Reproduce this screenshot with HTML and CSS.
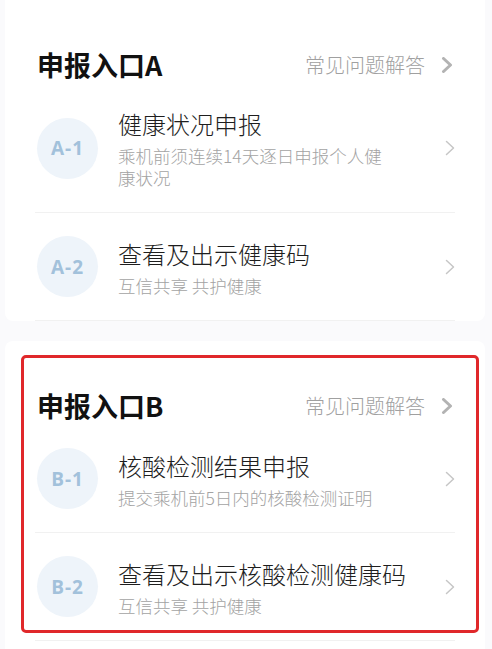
FILE: index.html
```html
<!DOCTYPE html>
<html lang="zh-CN">
<head>
<meta charset="utf-8">
<link rel="stylesheet" href="styles.css">
</head>
<body>
<div class="page">
  <section class="card card-a">
    <div class="card-head">
      <h2 class="card-title">申报入口A</h2>
      <div class="faq">常见问题解答
        <svg class="faq-arrow" viewBox="0 0 12 16" width="12" height="16"><path d="M2.5 1.5 L9.5 8 L2.5 14.5" fill="none" stroke="#b3b3b3" stroke-width="3" stroke-linecap="round" stroke-linejoin="round"/></svg>
      </div>
    </div>
    <div class="item">
      <div class="badge">A-1</div>
      <div class="item-text">
        <div class="item-title">健康状况申报</div>
        <div class="item-sub narrow">乘机前须连续14天逐日申报个人健康状况</div>
      </div>
      <svg class="item-arrow" viewBox="0 0 10 16" width="10" height="16"><path d="M1.5 1.5 L8.5 8 L1.5 14.5" fill="none" stroke="#c6c6c6" stroke-width="1.5" stroke-linecap="round" stroke-linejoin="round"/></svg>
    </div>
    <div class="item">
      <div class="badge">A-2</div>
      <div class="item-text">
        <div class="item-title">查看及出示健康码</div>
        <div class="item-sub">互信共享 共护健康</div>
      </div>
      <svg class="item-arrow" viewBox="0 0 10 16" width="10" height="16"><path d="M1.5 1.5 L8.5 8 L1.5 14.5" fill="none" stroke="#c6c6c6" stroke-width="1.5" stroke-linecap="round" stroke-linejoin="round"/></svg>
    </div>
  </section>

  <section class="card card-b">
    <div class="card-head">
      <h2 class="card-title">申报入口B</h2>
      <div class="faq">常见问题解答
        <svg class="faq-arrow" viewBox="0 0 12 16" width="12" height="16"><path d="M2.5 1.5 L9.5 8 L2.5 14.5" fill="none" stroke="#b3b3b3" stroke-width="3" stroke-linecap="round" stroke-linejoin="round"/></svg>
      </div>
    </div>
    <div class="item">
      <div class="badge">B-1</div>
      <div class="item-text">
        <div class="item-title">核酸检测结果申报</div>
        <div class="item-sub">提交乘机前5日内的核酸检测证明</div>
      </div>
      <svg class="item-arrow" viewBox="0 0 10 16" width="10" height="16"><path d="M1.5 1.5 L8.5 8 L1.5 14.5" fill="none" stroke="#c6c6c6" stroke-width="1.5" stroke-linecap="round" stroke-linejoin="round"/></svg>
    </div>
    <div class="item">
      <div class="badge">B-2</div>
      <div class="item-text">
        <div class="item-title">查看及出示核酸检测健康码</div>
        <div class="item-sub">互信共享 共护健康</div>
      </div>
      <svg class="item-arrow" viewBox="0 0 10 16" width="10" height="16"><path d="M1.5 1.5 L8.5 8 L1.5 14.5" fill="none" stroke="#c6c6c6" stroke-width="1.5" stroke-linecap="round" stroke-linejoin="round"/></svg>
    </div>
    <div class="highlight"></div>
  </section>
</div>
</body>
</html>
```

FILE: styles.css
```css
* { box-sizing: border-box; }
html, body {
  margin: 0;
  padding: 0;
  background: #fafafc;
  font-family: "Noto Sans CJK SC", "Noto Sans", "Liberation Sans", sans-serif;
  color: #1c1c1c;
}
.page {
  width: 492px;
  height: 649px;
  overflow: hidden;
  padding: 0 7px 0 5px;
  display: flex;
  flex-direction: column;
  gap: 20px;
}
.card {
  background: #ffffff;
  border-radius: 8px;
  padding: 0 30px 0 32px;
  position: relative;
}
.card-a { border-radius: 0 0 8px 8px; }
.card-b { flex: 1; border-radius: 8px 8px 0 0; }
.card-head {
  height: 84px;
  padding-top: 46px;
  display: flex;
  justify-content: space-between;
  align-items: flex-start;
}
.card-title {
  margin: 0;
  font-size: 27px;
  line-height: 38px;
  font-weight: 700;
  color: #111;
}
.faq {
  display: flex;
  align-items: center;
  gap: 16px;
  font-size: 20px;
  line-height: 38px;
  font-weight: 300;
  color: #a0a0a0;
  margin-right: 2px;
}
.faq-arrow { display: block; }
.item {
  display: flex;
  align-items: center;
  padding: 23px 0 23px 2px;
  border-bottom: 1px solid #f1f1f1;
  margin-left: -2px;
}
.badge {
  width: 61px;
  height: 61px;
  flex: none;
  border-radius: 50%;
  background: #eef4fa;
  color: #a2c1db;
  font-size: 19px;
  font-weight: 700;
  letter-spacing: 1px;
  display: flex;
  align-items: center;
  justify-content: center;
  font-family: "Open Sans", "Noto Sans", sans-serif;
}
.item-text {
  flex: 1;
  margin-left: 20px;
}
.item-title {
  font-size: 24px;
  line-height: 34px;
  font-weight: 300;
  color: #1e1e1e;
}
.item-sub {
  font-size: 17.5px;
  line-height: 22px;
  margin-top: 4px;
  font-weight: 300;
  color: #a3a3a3;
}
.item-sub.narrow { max-width: 276px; }
.item-arrow {
  flex: none;
  display: block;
  margin-left: 10px;
}
.highlight {
  position: absolute;
  left: 16px;
  right: 6px;
  top: 14px;
  height: 278px;
  border: 3px solid #e0282a;
  border-radius: 5px;
  pointer-events: none;
}
```
